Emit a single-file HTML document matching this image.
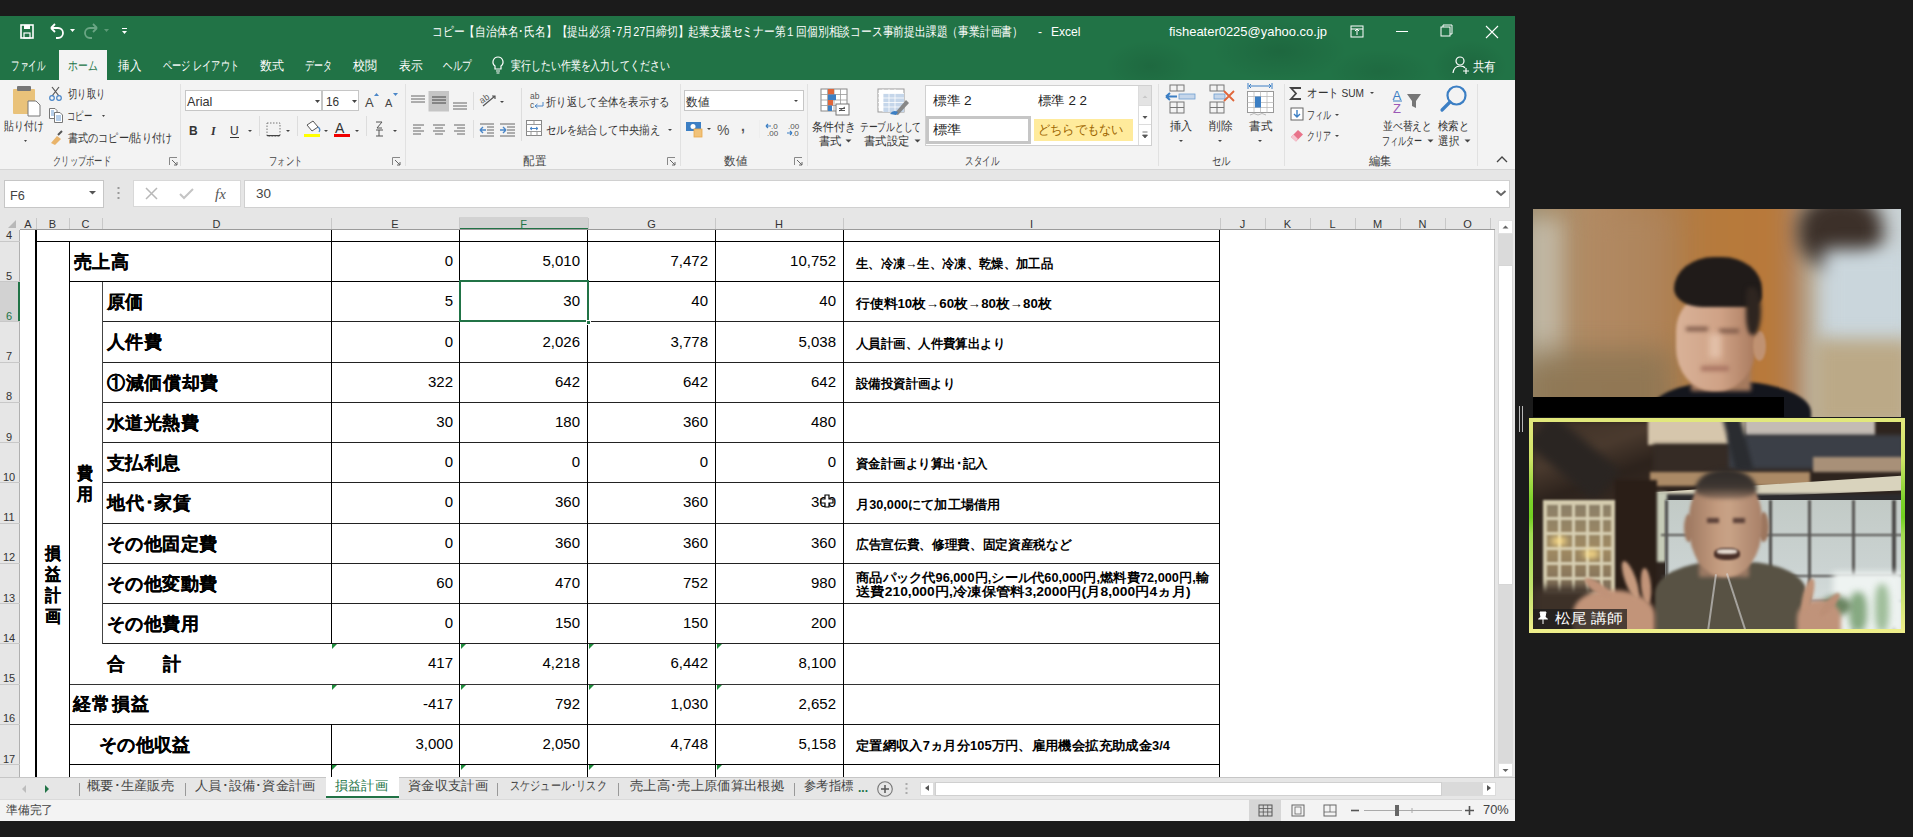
<!DOCTYPE html><html><head><meta charset="utf-8"><style>
*{margin:0;padding:0;box-sizing:border-box}
html,body{width:1913px;height:837px;overflow:hidden;background:#1b1b1b;font-family:"Liberation Sans",sans-serif;}
div{position:absolute}
.t{white-space:nowrap;line-height:1;transform:translateY(-50%)}
.w{color:#fff}
.rb{color:#444;font-size:12px}
.gl{color:#444;font-size:12px;transform:translate(-50%,-50%)}
.num{font-size:15px;color:#000;text-align:right;line-height:1;transform:translateY(-50%)}
.lab{font-size:18px;font-weight:bold;color:#000;line-height:1;transform:translateY(-50%);white-space:nowrap}
.note{font-size:12.5px;font-weight:bold;color:#000;line-height:14px;white-space:nowrap}
.ln{background:#000}
.sep{background:#d4d4d4;width:1px}
svg{position:absolute;overflow:visible}
</style></head><body>
<div style="left:0px;top:16px;width:1515px;height:64px;background:#217346"></div>
<div style="left:1000px;top:16px;width:515px;height:64px;background:radial-gradient(ellipse 60px 35px at 150px 50px, rgba(0,0,0,0.09), transparent 75%),radial-gradient(ellipse 90px 40px at 280px 35px, rgba(0,0,0,0.10), transparent 75%),radial-gradient(ellipse 70px 30px at 380px 55px, rgba(0,0,0,0.08), transparent 75%),radial-gradient(ellipse 50px 35px at 470px 50px, rgba(0,0,0,0.10), transparent 75%)"></div>
<svg style="left:0;top:16px" width="160" height="32">
<rect x="21" y="9" width="12" height="13" fill="none" stroke="#fff" stroke-width="1.6"/>
<rect x="24" y="9" width="6" height="4" fill="#fff"/>
<rect x="24" y="17" width="6" height="5" fill="none" stroke="#fff" stroke-width="1.2"/>
<path d="M51 12 L55 8 M51 12 L55 16 M51 12 H58 A5 5 0 0 1 58 22 H56" fill="none" stroke="#fff" stroke-width="1.8"/>
<path d="M70 13 L75 13 L72.5 16 Z" fill="#fff"/>
<path d="M97 12 L93 8 M97 12 L93 16 M97 12 H90 A5 5 0 0 0 90 22 H92" fill="none" stroke="#6aa584" stroke-width="1.8"/>
<path d="M104 13 L109 13 L106.5 16 Z" fill="#5c9a77"/>
<rect x="122" y="12" width="5" height="1" fill="#fff"/><path d="M122 15 L127 15 L124.5 18 Z" fill="#fff"/>
</svg>
<svg style="left:432px;top:21.30px" width="597.0" height="20.8"><text x="0" y="15.08" font-size="13" fill="#fff" font-weight="normal" font-family="Liberation Sans" textLength="591.0" lengthAdjust="spacingAndGlyphs" >コピー【自治体名･氏名】【提出必須･7月27日締切】起業支援セミナー第１回個別相談コース事前提出課題（事業計画書）</text></svg>
<svg style="left:1038px;top:22.10px" width="10.0" height="19.2"><text x="0" y="13.92" font-size="12" fill="#fff" font-weight="normal" font-family="Liberation Sans" textLength="4.0" lengthAdjust="spacingAndGlyphs" >-</text></svg>
<svg style="left:1051px;top:21.30px" width="35.5" height="20.8"><text x="0" y="15.08" font-size="13" fill="#fff" font-weight="normal" font-family="Liberation Sans" textLength="29.5" lengthAdjust="spacingAndGlyphs" >Excel</text></svg>
<svg style="left:1169px;top:21.10px" width="164.0" height="20.8"><text x="0" y="15.08" font-size="13" fill="#fff" font-weight="normal" font-family="Liberation Sans" textLength="158.0" lengthAdjust="spacingAndGlyphs" >fisheater0225@yahoo.co.jp</text></svg>
<svg style="left:1340px;top:16px" width="175" height="32">
<rect x="11" y="10" width="12" height="11" fill="none" stroke="#fff" stroke-width="1"/>
<path d="M11 13 H23 M15 15 L17 13 L19 15 M17 13 V19" fill="none" stroke="#fff" stroke-width="1"/>
<path d="M56 15.5 H68" stroke="#fff" stroke-width="1"/>
<rect x="101" y="11" width="9" height="9" fill="none" stroke="#fff" stroke-width="1"/>
<path d="M103 11 V9 H112 V18 H110" fill="none" stroke="#fff" stroke-width="1"/>
<path d="M146 10 L158 22 M158 10 L146 22" stroke="#fff" stroke-width="1.1"/>
</svg>
<div style="left:59px;top:50px;width:48px;height:30px;background:#f3f3f3"></div>
<svg style="left:11px;top:54.80px" width="40.0" height="20.0"><text x="0" y="14.50" font-size="12.5" fill="#fff" font-weight="normal" font-family="Liberation Sans" textLength="34.0" lengthAdjust="spacingAndGlyphs" >ファイル</text></svg>
<svg style="left:67.5px;top:54.80px" width="35.5" height="20.0"><text x="0" y="14.50" font-size="12.5" fill="#217346" font-weight="normal" font-family="Liberation Sans" textLength="29.5" lengthAdjust="spacingAndGlyphs" >ホーム</text></svg>
<svg style="left:118px;top:54.80px" width="29.0" height="20.0"><text x="0" y="14.50" font-size="12.5" fill="#fff" font-weight="normal" font-family="Liberation Sans" textLength="23.0" lengthAdjust="spacingAndGlyphs" >挿入</text></svg>
<svg style="left:163px;top:54.80px" width="82.0" height="20.0"><text x="0" y="14.50" font-size="12.5" fill="#fff" font-weight="normal" font-family="Liberation Sans" textLength="76.0" lengthAdjust="spacingAndGlyphs" >ページ レイアウト</text></svg>
<svg style="left:260px;top:54.80px" width="30.0" height="20.0"><text x="0" y="14.50" font-size="12.5" fill="#fff" font-weight="normal" font-family="Liberation Sans" textLength="24.0" lengthAdjust="spacingAndGlyphs" >数式</text></svg>
<svg style="left:305px;top:54.80px" width="33.0" height="20.0"><text x="0" y="14.50" font-size="12.5" fill="#fff" font-weight="normal" font-family="Liberation Sans" textLength="27.0" lengthAdjust="spacingAndGlyphs" >データ</text></svg>
<svg style="left:353px;top:54.80px" width="30.0" height="20.0"><text x="0" y="14.50" font-size="12.5" fill="#fff" font-weight="normal" font-family="Liberation Sans" textLength="24.0" lengthAdjust="spacingAndGlyphs" >校閲</text></svg>
<svg style="left:398.5px;top:54.80px" width="29.5" height="20.0"><text x="0" y="14.50" font-size="12.5" fill="#fff" font-weight="normal" font-family="Liberation Sans" textLength="23.5" lengthAdjust="spacingAndGlyphs" >表示</text></svg>
<svg style="left:443px;top:54.80px" width="34.6" height="20.0"><text x="0" y="14.50" font-size="12.5" fill="#fff" font-weight="normal" font-family="Liberation Sans" textLength="28.6" lengthAdjust="spacingAndGlyphs" >ヘルプ</text></svg>
<svg style="left:510.5px;top:54.80px" width="164.9" height="20.0"><text x="0" y="14.50" font-size="12.5" fill="#fff" font-weight="normal" font-family="Liberation Sans" textLength="158.9" lengthAdjust="spacingAndGlyphs" >実行したい作業を入力してください</text></svg>
<svg style="left:488px;top:54px" width="20" height="22"><path d="M10 3 A5 5 0 0 1 13 12 V15 H7 V12 A5 5 0 0 1 10 3 Z M8 17 H12 M8.5 19 H11.5" fill="none" stroke="#fff" stroke-width="1.2"/></svg>
<svg style="left:1450px;top:55px" width="20" height="22"><circle cx="10" cy="6" r="4" fill="none" stroke="#fff" stroke-width="1.2"/><path d="M3 18 Q4 11 10 11 Q14 11 15 13" fill="none" stroke="#fff" stroke-width="1.2"/><path d="M13 16 H19 M16 13 V19" stroke="#fff" stroke-width="1.2"/></svg>
<svg style="left:1472.7px;top:55.60px" width="28.9" height="20.0"><text x="0" y="14.50" font-size="12.5" fill="#fff" font-weight="normal" font-family="Liberation Sans" textLength="22.9" lengthAdjust="spacingAndGlyphs" >共有</text></svg>
<div style="left:0px;top:80px;width:1515px;height:89px;background:#f3f3f3"></div>
<div style="left:0px;top:169px;width:1515px;height:1px;background:#d5d5d5"></div>
<div style="left:180px;top:84px;width:1px;height:82px;background:#e1e1e1"></div>
<div style="left:404.5px;top:84px;width:1px;height:82px;background:#e1e1e1"></div>
<div style="left:680px;top:84px;width:1px;height:82px;background:#e1e1e1"></div>
<div style="left:807px;top:84px;width:1px;height:82px;background:#e1e1e1"></div>
<div style="left:1157.5px;top:84px;width:1px;height:82px;background:#e1e1e1"></div>
<div style="left:1283.5px;top:84px;width:1px;height:82px;background:#e1e1e1"></div>
<div style="left:1477px;top:84px;width:1px;height:82px;background:#e1e1e1"></div>
<svg style="left:53px;top:151.80px" width="64.0" height="18.4"><text x="0" y="13.34" font-size="11.5" fill="#444" font-weight="normal" font-family="Liberation Sans" textLength="58.0" lengthAdjust="spacingAndGlyphs" >クリップボード</text></svg>
<svg style="left:268.5px;top:151.80px" width="39.2" height="18.4"><text x="0" y="13.34" font-size="11.5" fill="#444" font-weight="normal" font-family="Liberation Sans" textLength="33.2" lengthAdjust="spacingAndGlyphs" >フォント</text></svg>
<svg style="left:522.7px;top:151.80px" width="29.0" height="18.4"><text x="0" y="13.34" font-size="11.5" fill="#444" font-weight="normal" font-family="Liberation Sans" textLength="23.0" lengthAdjust="spacingAndGlyphs" >配置</text></svg>
<svg style="left:724.3px;top:151.80px" width="29.1" height="18.4"><text x="0" y="13.34" font-size="11.5" fill="#444" font-weight="normal" font-family="Liberation Sans" textLength="23.1" lengthAdjust="spacingAndGlyphs" >数値</text></svg>
<svg style="left:965px;top:151.80px" width="40.0" height="18.4"><text x="0" y="13.34" font-size="11.5" fill="#444" font-weight="normal" font-family="Liberation Sans" textLength="34.0" lengthAdjust="spacingAndGlyphs" >スタイル</text></svg>
<svg style="left:1211.5px;top:151.80px" width="24.8" height="18.4"><text x="0" y="13.34" font-size="11.5" fill="#444" font-weight="normal" font-family="Liberation Sans" textLength="18.8" lengthAdjust="spacingAndGlyphs" >セル</text></svg>
<svg style="left:1368.6px;top:151.80px" width="28.6" height="18.4"><text x="0" y="13.34" font-size="11.5" fill="#444" font-weight="normal" font-family="Liberation Sans" textLength="22.6" lengthAdjust="spacingAndGlyphs" >編集</text></svg>
<svg style="left:169px;top:157px" width="9" height="9"><path d="M0.5 8 V0.5 H8" fill="none" stroke="#888" stroke-width="1"/><path d="M3 3 L8 8 M5 8 H8 V5" fill="none" stroke="#666" stroke-width="1"/></svg>
<svg style="left:392px;top:157px" width="9" height="9"><path d="M0.5 8 V0.5 H8" fill="none" stroke="#888" stroke-width="1"/><path d="M3 3 L8 8 M5 8 H8 V5" fill="none" stroke="#666" stroke-width="1"/></svg>
<svg style="left:667px;top:157px" width="9" height="9"><path d="M0.5 8 V0.5 H8" fill="none" stroke="#888" stroke-width="1"/><path d="M3 3 L8 8 M5 8 H8 V5" fill="none" stroke="#666" stroke-width="1"/></svg>
<svg style="left:794px;top:157px" width="9" height="9"><path d="M0.5 8 V0.5 H8" fill="none" stroke="#888" stroke-width="1"/><path d="M3 3 L8 8 M5 8 H8 V5" fill="none" stroke="#666" stroke-width="1"/></svg>
<svg style="left:1496px;top:156px" width="12" height="8"><path d="M1 6 L6 1 L11 6" fill="none" stroke="#444" stroke-width="1.3"/></svg>
<svg style="left:0;top:80px" width="180" height="80">
<rect x="13" y="9" width="22" height="25" rx="1" fill="#e9c27a"/>
<rect x="17" y="6" width="14" height="5" rx="1" fill="#777"/>
<path d="M28 21 H36 L40 25 V36 H28 Z" fill="#fff" stroke="#777" stroke-width="1"/>
<path d="M24 60 L27 60 L25.5 62 Z" fill="#444"/>
<path d="M52 7 L59 16 M59 7 L52 16" stroke="#555" stroke-width="1.2"/>
<circle cx="52" cy="18" r="2.3" fill="none" stroke="#4a86c8" stroke-width="1.2"/>
<circle cx="59" cy="18" r="2.3" fill="none" stroke="#4a86c8" stroke-width="1.2"/>
<path d="M49.5 28.5 H55 L57 30.5 V38.5 H49.5 Z" fill="#fff" stroke="#777" stroke-width="1"/>
<path d="M51 31 H54 M51 33 H55 M51 35 H55" stroke="#4a86c8" stroke-width="0.8"/>
<path d="M54.5 32.5 H60 L62.5 35 V42.5 H54.5 Z" fill="#fff" stroke="#777" stroke-width="1"/>
<path d="M56 36 H61 M56 38 H61 M56 40 H61" stroke="#4a86c8" stroke-width="0.8"/>
<path d="M102 35 L105 35 L103.5 37 Z" fill="#444"/>
<path d="M51 63 L57 56 L61 59 L55 65 Z" fill="#e9b46a"/>
<path d="M58 55 L62 51" stroke="#555" stroke-width="2"/>
</svg>
<svg style="left:4.2px;top:116.80px" width="45.4" height="18.4"><text x="0" y="13.34" font-size="11.5" fill="#333" font-weight="normal" font-family="Liberation Sans" textLength="39.4" lengthAdjust="spacingAndGlyphs" >貼り付け</text></svg>
<svg style="left:67.5px;top:85.10px" width="43.0" height="18.4"><text x="0" y="13.34" font-size="11.5" fill="#333" font-weight="normal" font-family="Liberation Sans" textLength="37.0" lengthAdjust="spacingAndGlyphs" >切り取り</text></svg>
<svg style="left:67px;top:106.60px" width="31.0" height="18.4"><text x="0" y="13.34" font-size="11.5" fill="#333" font-weight="normal" font-family="Liberation Sans" textLength="25.0" lengthAdjust="spacingAndGlyphs" >コピー</text></svg>
<svg style="left:67.5px;top:129.30px" width="109.9" height="18.4"><text x="0" y="13.34" font-size="11.5" fill="#333" font-weight="normal" font-family="Liberation Sans" textLength="103.9" lengthAdjust="spacingAndGlyphs" >書式のコピー/貼り付け</text></svg>
<div style="left:185px;top:90px;width:137px;height:21px;background:#fff;border:1px solid #c6c6c6"></div>
<div style="left:322px;top:90px;width:37px;height:21px;background:#fff;border:1px solid #c6c6c6"></div>
<svg style="left:187px;top:91.00px" width="31.4" height="20.8"><text x="0" y="15.08" font-size="13" fill="#333" font-weight="normal" font-family="Liberation Sans" textLength="25.4" lengthAdjust="spacingAndGlyphs" >Arial</text></svg>
<svg style="left:325.6px;top:91.00px" width="19.1" height="20.8"><text x="0" y="15.08" font-size="13" fill="#333" font-weight="normal" font-family="Liberation Sans" textLength="13.1" lengthAdjust="spacingAndGlyphs" >16</text></svg>
<svg style="left:180px;top:80px" width="230" height="80">
<path d="M135 20 L140 20 L137.5 23 Z" fill="#444"/>
<path d="M172 20 L177 20 L174.5 23 Z" fill="#444"/>
<text x="185" y="27" font-size="13" fill="#444" font-family="Liberation Sans">A</text>
<path d="M194 16 L196.5 13 L199 16 Z" fill="#4a86c8"/>
<text x="205" y="27" font-size="11" fill="#444" font-family="Liberation Sans">A</text>
<path d="M213 13 L218 13 L215.5 16 Z" fill="#4a86c8"/>
<text x="9" y="55" font-size="12" font-weight="bold" fill="#333" font-family="Liberation Sans">B</text>
<text x="31" y="55" font-size="12" font-style="italic" font-weight="bold" fill="#333" font-family="Liberation Serif">I</text>
<text x="50" y="55" font-size="12" fill="#333" font-family="Liberation Sans">U</text>
<rect x="50" y="57" width="9" height="1" fill="#333"/>
<path d="M68 50 L72 50 L70 52 Z" fill="#444"/>
<rect x="79" y="36" width="1" height="20" fill="#ddd"/>
<rect x="87" y="43" width="13" height="13" fill="none" stroke="#777" stroke-width="1" stroke-dasharray="1.5 1.5"/>
<rect x="87" y="55" width="13" height="1.2" fill="#444"/>
<path d="M106 50 L110 50 L108 52 Z" fill="#444"/>
<rect x="117" y="36" width="1" height="20" fill="#ddd"/>
<path d="M127 45 L133 41 L138 47 L132 51 Z" fill="#fff" stroke="#555" stroke-width="1"/>
<path d="M138 47 Q141 49 139 52" fill="none" stroke="#4a86c8" stroke-width="1.3"/>
<rect x="124" y="54" width="16" height="3" fill="#ffff00"/>
<path d="M144 50 L148 50 L146 52 Z" fill="#444"/>
<text x="155" y="53" font-size="14" fill="#333" font-family="Liberation Sans">A</text>
<rect x="154" y="54" width="16" height="3" fill="#f00000"/>
<path d="M175 50 L179 50 L177 52 Z" fill="#444"/>
<rect x="186" y="36" width="1" height="20" fill="#ddd"/>
<path d="M196 42 H202 L197 48 H202 M196 50 H203 M199 50 V56 M196 56 H203" fill="none" stroke="#555" stroke-width="1"/>
<path d="M213 50 L217 50 L215 52 Z" fill="#444"/>
</svg>
<svg style="left:404px;top:80px" width="280" height="80">
<path d="M7 16 H21 M7 19 H21 M7 22 H21" stroke="#666" stroke-width="1"/>
<rect x="24.5" y="11" width="20.5" height="20.5" fill="#c5c5c5"/>
<path d="M28 17 H42 M28 20 H42 M28 23 H42" stroke="#444" stroke-width="1"/>
<path d="M49 23 H63 M49 26 H63 M49 29 H63" stroke="#666" stroke-width="1"/>
<rect x="69" y="12" width="1" height="18" fill="#ddd"/>
<path d="M79 26 L91 16 M88 16 H91 V19" fill="none" stroke="#555" stroke-width="1.2"/>
<text x="76" y="22" font-size="9" fill="#555" font-family="Liberation Sans" transform="rotate(-35 80 20)">ab</text>
<path d="M96 21 L100 21 L98 23 Z" fill="#444"/>
<rect x="117" y="8" width="1" height="53" fill="#ddd"/>
<text x="126" y="19" font-size="8.5" fill="#555" font-family="Liberation Sans">ab</text>
<text x="126" y="28" font-size="8.5" fill="#555" font-family="Liberation Sans">c</text>
<path d="M131 26 H139 V22 M131 26 L133.5 24 M131 26 L133.5 28" fill="none" stroke="#4a86c8" stroke-width="1"/>
<path d="M9 45 H20 M9 48 H17 M9 51 H20 M9 54 H17" stroke="#666" stroke-width="1"/>
<path d="M29 45 H41 M31 48 H39 M29 51 H41 M31 54 H39" stroke="#666" stroke-width="1"/>
<path d="M50 45 H61 M53 48 H61 M50 51 H61 M53 54 H61" stroke="#666" stroke-width="1"/>
<rect x="69" y="40" width="1" height="18" fill="#ddd"/>
<path d="M76 44 H90 M83 47 H90 M83 50 H90 M83 53 H90 M76 56 H90" stroke="#666" stroke-width="1"/>
<path d="M76 50 H82 M76 50 L79 47 M76 50 L79 53" fill="none" stroke="#4a86c8" stroke-width="1.4"/>
<path d="M96 44 H111 M103 47 H111 M103 50 H111 M103 53 H111 M96 56 H111" stroke="#666" stroke-width="1"/>
<path d="M96 50 H102 M102 50 L99 47 M102 50 L99 53" fill="none" stroke="#4a86c8" stroke-width="1.4"/>
<rect x="122.5" y="40.5" width="15" height="15" fill="#fff" stroke="#888" stroke-width="1"/>
<path d="M122.5 44.5 H137.5 M122.5 51.5 H137.5 M130 40.5 V44.5 M127 51.5 V55.5 M133 51.5 V55.5" stroke="#999" stroke-width="1"/>
<path d="M126 48.5 H134 M126 48.5 L128 47 M126 48.5 L128 50 M134 48.5 L132 47 M134 48.5 L132 50" fill="none" stroke="#4a86c8" stroke-width="1"/>
<path d="M264 49 L268 49 L266 51 Z" fill="#444"/>
</svg>
<svg style="left:545.7px;top:93.30px" width="129.7" height="18.4"><text x="0" y="13.34" font-size="11.5" fill="#333" font-weight="normal" font-family="Liberation Sans" textLength="123.7" lengthAdjust="spacingAndGlyphs" >折り返して全体を表示する</text></svg>
<svg style="left:546px;top:121.10px" width="120.0" height="18.4"><text x="0" y="13.34" font-size="11.5" fill="#333" font-weight="normal" font-family="Liberation Sans" textLength="114.0" lengthAdjust="spacingAndGlyphs" >セルを結合して中央揃え</text></svg>
<div style="left:683.5px;top:90px;width:120px;height:21px;background:#fff;border:1px solid #c6c6c6"></div>
<svg style="left:686px;top:92.10px" width="29.4" height="19.2"><text x="0" y="13.92" font-size="12" fill="#333" font-weight="normal" font-family="Liberation Sans" textLength="23.4" lengthAdjust="spacingAndGlyphs" >数値</text></svg>
<svg style="left:680px;top:80px" width="130" height="80">
<path d="M114 20 L118 20 L116 22 Z" fill="#444"/>
<rect x="6" y="42" width="15" height="9" fill="#3c7fc4"/>
<circle cx="13" cy="46.5" r="2.5" fill="#fff"/>
<rect x="14" y="49" width="8" height="8" fill="#f0c27a" stroke="#e9a94a" stroke-width="0.8"/>
<path d="M27 48 L31 48 L29 50 Z" fill="#444"/>
<text x="37" y="55" font-size="14" fill="#555" font-family="Liberation Sans">%</text>
<text x="61" y="51" font-size="14" font-weight="bold" fill="#555" font-family="Liberation Sans">,</text>
<rect x="79" y="40" width="1" height="18" fill="#eee"/>
<text x="91" y="49" font-size="8" fill="#555" font-family="Liberation Sans">.0</text>
<text x="87" y="56" font-size="8" fill="#555" font-family="Liberation Sans">.00</text>
<path d="M86 46 H91 M86 46 L88 44 M86 46 L88 48" fill="none" stroke="#3c7fc4" stroke-width="1.2"/>
<text x="108" y="49" font-size="8" fill="#555" font-family="Liberation Sans">.00</text>
<text x="112" y="56" font-size="8" fill="#555" font-family="Liberation Sans">.0</text>
<path d="M107 53 H112 M112 53 L110 51 M112 53 L110 55" fill="none" stroke="#3c7fc4" stroke-width="1.2"/>
</svg>
<svg style="left:810px;top:80px" width="120" height="80">
<rect x="11" y="9" width="26" height="22" fill="#fff" stroke="#888" stroke-width="1"/>
<path d="M11 14.5 H37 M11 20 H37 M11 25.5 H37 M17.5 9 V31 M24 9 V31 M30.5 9 V31" stroke="#999" stroke-width="0.8"/>
<rect x="18" y="9" width="6" height="5.5" fill="#e0663a"/>
<rect x="18" y="14.5" width="8" height="5.5" fill="#3c7fc4"/>
<rect x="18" y="20" width="5" height="5.5" fill="#e0663a"/>
<rect x="18" y="25.5" width="4" height="5.5" fill="#3c7fc4"/>
<rect x="26" y="24" width="13" height="11" fill="#fff" stroke="#777" stroke-width="1"/>
<path d="M29 31 L35 27 M29 28.5 H35 M29 30.5 H35" stroke="#444" stroke-width="0.9"/>
<rect x="68" y="9" width="26" height="23" fill="#fff" stroke="#999" stroke-width="1"/>
<rect x="73" y="13.5" width="21" height="18.5" fill="#c5d6ea"/>
<path d="M68 13.5 H94 M68 18 H94 M68 22.5 H94 M68 27 H94 M73 9 V32 M79 9 V32 M85 9 V32" stroke="#fff" stroke-width="0.8"/>
<path d="M84 34 L96 20 L99 23 L88 35 Z" fill="#888"/>
<path d="M80 34 Q83 29 88 32 L86 35 Z" fill="#3c7fc4"/>
</svg>
<svg style="left:812.4px;top:117.60px" width="49.7" height="18.4"><text x="0" y="13.34" font-size="11.5" fill="#333" font-weight="normal" font-family="Liberation Sans" textLength="43.7" lengthAdjust="spacingAndGlyphs" >条件付き</text></svg>
<svg style="left:819.2px;top:131.80px" width="28.7" height="18.4"><text x="0" y="13.34" font-size="11.5" fill="#333" font-weight="normal" font-family="Liberation Sans" textLength="22.7" lengthAdjust="spacingAndGlyphs" >書式</text></svg>
<svg style="left:845px;top:139px" width="8" height="5"><path d="M0.5 0.5 L6.5 0.5 L3.5 3.5 Z" fill="#444"/></svg>
<svg style="left:860.2px;top:117.60px" width="67.2" height="18.4"><text x="0" y="13.34" font-size="11.5" fill="#333" font-weight="normal" font-family="Liberation Sans" textLength="61.2" lengthAdjust="spacingAndGlyphs" >テーブルとして</text></svg>
<svg style="left:864px;top:131.80px" width="51.8" height="18.4"><text x="0" y="13.34" font-size="11.5" fill="#333" font-weight="normal" font-family="Liberation Sans" textLength="45.8" lengthAdjust="spacingAndGlyphs" >書式設定</text></svg>
<svg style="left:914px;top:139px" width="8" height="5"><path d="M0.5 0.5 L6.5 0.5 L3.5 3.5 Z" fill="#444"/></svg>
<div style="left:925px;top:85px;width:227px;height:61px;background:#fff;border:1px solid #d0d0d0"></div>
<div style="left:926px;top:116px;width:105px;height:28px;background:#fff;border:3px solid #c6c6c6"></div>
<div style="left:1034px;top:119px;width:99px;height:22px;background:#ffeb9c"></div>
<svg style="left:933px;top:89.90px" width="44.6" height="20.8"><text x="0" y="15.08" font-size="13" fill="#222" font-weight="normal" font-family="Liberation Sans" textLength="38.6" lengthAdjust="spacingAndGlyphs" >標準 2</text></svg>
<svg style="left:1038.3px;top:89.90px" width="55.0" height="20.8"><text x="0" y="15.08" font-size="13" fill="#222" font-weight="normal" font-family="Liberation Sans" textLength="49.0" lengthAdjust="spacingAndGlyphs" >標準 2 2</text></svg>
<svg style="left:933px;top:118.60px" width="34.6" height="20.8"><text x="0" y="15.08" font-size="13" fill="#222" font-weight="normal" font-family="Liberation Sans" textLength="28.6" lengthAdjust="spacingAndGlyphs" >標準</text></svg>
<svg style="left:1038.3px;top:118.60px" width="91.6" height="20.8"><text x="0" y="15.08" font-size="13" fill="#9c6500" font-weight="normal" font-family="Liberation Sans" textLength="85.6" lengthAdjust="spacingAndGlyphs" >どちらでもない</text></svg>
<div style="left:1137.5px;top:86px;width:13.5px;height:59px;background:#fff;border-left:1px solid #dcdcdc"></div>
<div style="left:1138.5px;top:86px;width:12.5px;height:19.5px;background:#e3e3e3"></div>
<div style="left:1138.5px;top:105px;width:12.5px;height:1px;background:#dcdcdc"></div>
<div style="left:1138.5px;top:124px;width:12.5px;height:1px;background:#dcdcdc"></div>
<svg style="left:1138px;top:85px" width="14" height="61">
<path d="M4.5 13 L7 10.5 L9.5 13 Z" fill="#c8c8c8"/>
<path d="M4.5 31 L9.5 31 L7 34 Z" fill="#555"/>
<path d="M4.5 47 H9.5 M4.5 50 L9.5 50 L7 53 Z" fill="#555" stroke="#555" stroke-width="0.8"/>
</svg>
<svg style="left:1157px;top:80px" width="130" height="80">
<rect x="13" y="5" width="14" height="6" fill="none" stroke="#777" stroke-width="1"/><path d="M20 5 V11" stroke="#777"/>
<rect x="13" y="22" width="14" height="11" fill="none" stroke="#777" stroke-width="1"/><path d="M20 22 V33 M13 27.5 H27" stroke="#777"/>
<rect x="22" y="14" width="16" height="5" fill="#c5d6ea" stroke="#6e9fd0" stroke-width="0.8"/>
<path d="M9 16.5 H20 M9 16.5 L13 13 M9 16.5 L13 20" fill="none" stroke="#3c7fc4" stroke-width="2"/>
<rect x="53" y="5" width="14" height="6" fill="none" stroke="#777" stroke-width="1"/><path d="M60 5 V11" stroke="#777"/>
<rect x="53" y="22" width="14" height="11" fill="none" stroke="#777" stroke-width="1"/><path d="M60 22 V33 M53 27.5 H67" stroke="#777"/>
<rect x="57" y="14" width="11" height="5" fill="#c5d6ea" stroke="#6e9fd0" stroke-width="0.8"/>
<path d="M67 11 L77 21 M77 11 L67 21" stroke="#e0663a" stroke-width="1.8"/>
<path d="M92 6 H114 M92 6 L94 4 M92 6 L94 8 M114 6 L112 4 M114 6 L112 8" fill="none" stroke="#3c7fc4" stroke-width="1"/>
<path d="M91 3 V9 M115 3 V9" stroke="#3c7fc4"/>
<rect x="90.5" y="11.5" width="26" height="21" fill="#fff" stroke="#999" stroke-width="1"/>
<path d="M90.5 16.5 H116.5 M90.5 22.5 H116.5 M90.5 27.5 H116.5 M97 11.5 V32.5 M103.5 11.5 V32.5 M110 11.5 V32.5" stroke="#bbb" stroke-width="0.8"/>
<rect x="98" y="16.5" width="6" height="11" fill="#3c7fc4"/>
<path d="M93 35 Q97 32 101 35 Q105 32 109 35" fill="none" stroke="#aaa" stroke-width="0.8"/>
<path d="M22 60 L26 60 L24 62 Z" fill="#444"/>
<path d="M61 60 L65 60 L63 62 Z" fill="#444"/>
<path d="M101 60 L105 60 L103 62 Z" fill="#444"/>
</svg>
<svg style="left:1169.7px;top:117.00px" width="28.3" height="18.4"><text x="0" y="13.34" font-size="11.5" fill="#333" font-weight="normal" font-family="Liberation Sans" textLength="22.3" lengthAdjust="spacingAndGlyphs" >挿入</text></svg>
<svg style="left:1208.6px;top:117.00px" width="29.4" height="18.4"><text x="0" y="13.34" font-size="11.5" fill="#333" font-weight="normal" font-family="Liberation Sans" textLength="23.4" lengthAdjust="spacingAndGlyphs" >削除</text></svg>
<svg style="left:1248.5px;top:117.00px" width="29.2" height="18.4"><text x="0" y="13.34" font-size="11.5" fill="#333" font-weight="normal" font-family="Liberation Sans" textLength="23.2" lengthAdjust="spacingAndGlyphs" >書式</text></svg>
<svg style="left:1284px;top:80px" width="230" height="80">
<path d="M17 8 H7 L12 13.5 L7 19 H17" fill="none" stroke="#444" stroke-width="1.8"/>
<path d="M86 12 L90 12 L88 14 Z" fill="#444"/>
<rect x="7" y="28" width="12" height="12" fill="#fff" stroke="#666" stroke-width="1"/>
<path d="M13 30 V37 M10 34 L13 37 L16 34" fill="none" stroke="#3c7fc4" stroke-width="1.4"/>
<path d="M51 34 L55 34 L53 36 Z" fill="#444"/>
<path d="M7 57 L14 50 L19 54.5 L12 61.5 Z" fill="#e8738a"/><path d="M7 57 L9.5 54.5 L14 59 L12 61.5 Z" fill="#f6c6d0"/>
<path d="M51 55 L55 55 L53 57 Z" fill="#444"/>
<text x="108.5" y="20" font-size="13" fill="#3c7fc4" font-family="Liberation Sans">A</text>
<path d="M109 21 H118" stroke="#3c7fc4" stroke-width="1"/>
<text x="109" y="33" font-size="13" fill="#9b59b6" font-family="Liberation Sans">Z</text>
<path d="M123 14 H137 L132 21 V28 L128 26 V21 Z" fill="#777"/>
<circle cx="172.5" cy="15.5" r="9" fill="none" stroke="#3c7fc4" stroke-width="2.2"/>
<path d="M166 22 L158 30" stroke="#3c7fc4" stroke-width="3.2" stroke-linecap="round"/>
</svg>
<svg style="left:1307px;top:84.10px" width="63.0" height="18.4"><text x="0" y="13.34" font-size="11.5" fill="#333" font-weight="normal" font-family="Liberation Sans" textLength="57.0" lengthAdjust="spacingAndGlyphs" >オート SUM</text></svg>
<svg style="left:1307px;top:105.80px" width="30.0" height="18.4"><text x="0" y="13.34" font-size="11.5" fill="#333" font-weight="normal" font-family="Liberation Sans" textLength="24.0" lengthAdjust="spacingAndGlyphs" >フィル</text></svg>
<svg style="left:1307px;top:126.80px" width="30.0" height="18.4"><text x="0" y="13.34" font-size="11.5" fill="#333" font-weight="normal" font-family="Liberation Sans" textLength="24.0" lengthAdjust="spacingAndGlyphs" >クリア</text></svg>
<svg style="left:1382.7px;top:116.80px" width="54.9" height="18.4"><text x="0" y="13.34" font-size="11.5" fill="#333" font-weight="normal" font-family="Liberation Sans" textLength="48.9" lengthAdjust="spacingAndGlyphs" >並べ替えと</text></svg>
<svg style="left:1381.8px;top:131.80px" width="46.4" height="18.4"><text x="0" y="13.34" font-size="11.5" fill="#333" font-weight="normal" font-family="Liberation Sans" textLength="40.4" lengthAdjust="spacingAndGlyphs" >フィルター</text></svg>
<svg style="left:1427px;top:139px" width="8" height="5"><path d="M0.5 0.5 L6.5 0.5 L3.5 3.5 Z" fill="#444"/></svg>
<svg style="left:1438.2px;top:116.80px" width="37.1" height="18.4"><text x="0" y="13.34" font-size="11.5" fill="#333" font-weight="normal" font-family="Liberation Sans" textLength="31.1" lengthAdjust="spacingAndGlyphs" >検索と</text></svg>
<svg style="left:1438px;top:131.80px" width="27.0" height="18.4"><text x="0" y="13.34" font-size="11.5" fill="#333" font-weight="normal" font-family="Liberation Sans" textLength="21.0" lengthAdjust="spacingAndGlyphs" >選択</text></svg>
<svg style="left:1464px;top:139px" width="8" height="5"><path d="M0.5 0.5 L6.5 0.5 L3.5 3.5 Z" fill="#444"/></svg>
<div style="left:0px;top:170px;width:1515px;height:60px;background:#e6e6e6"></div>
<div style="left:4px;top:180px;width:100px;height:28px;background:#fff;border:1px solid #c6c6c6"></div>
<svg style="left:10.2px;top:185.20px" width="20.8" height="20.8"><text x="0" y="15.08" font-size="13" fill="#444" font-weight="normal" font-family="Liberation Sans" textLength="14.8" lengthAdjust="spacingAndGlyphs" >F6</text></svg>
<svg style="left:88px;top:190px" width="10" height="6"><path d="M1 1 L8 1 L4.5 4.5 Z" fill="#555"/></svg>
<svg style="left:116px;top:186px" width="6" height="16"><rect x="1.5" y="1" width="2" height="2" fill="#999"/><rect x="1.5" y="6" width="2" height="2" fill="#999"/><rect x="1.5" y="11" width="2" height="2" fill="#999"/></svg>
<div style="left:133px;top:180px;width:108px;height:27px;background:#fff;border:1px solid #d8d8d8"></div>
<svg style="left:133px;top:180px" width="108" height="27">
<path d="M13 8 L24 19 M24 8 L13 19" stroke="#b8b8b8" stroke-width="1.5"/>
<path d="M47 14 L51 18 L60 9" fill="none" stroke="#c4c4c4" stroke-width="2"/>
<text x="82" y="19" font-size="15" font-style="italic" fill="#555" font-family="Liberation Serif">fx</text>
</svg>
<div style="left:244px;top:180px;width:1266px;height:28px;background:#fff;border:1px solid #d0d0d0"></div>
<svg style="left:256px;top:182.40px" width="21.0" height="21.6"><text x="0" y="15.66" font-size="13.5" fill="#444" font-weight="normal" font-family="Liberation Sans" textLength="15.0" lengthAdjust="spacingAndGlyphs" >30</text></svg>
<svg style="left:1495px;top:189px" width="12" height="10"><path d="M1.5 2 L6 6 L10.5 2" fill="none" stroke="#666" stroke-width="2"/></svg>
<div style="left:459px;top:217px;width:129px;height:13px;background:#d2d2d2"></div>
<div style="left:459px;top:228px;width:129px;height:2px;background:#217346"></div>
<div class="t" style="left:28.0px;top:224px;font-size:11px;color:#333;transform:translate(-50%,-50%)">A</div>
<div style="left:36px;top:218px;width:1px;height:12px;background:#c8c8c8"></div>
<div class="t" style="left:52.5px;top:224px;font-size:11px;color:#333;transform:translate(-50%,-50%)">B</div>
<div style="left:69px;top:218px;width:1px;height:12px;background:#c8c8c8"></div>
<div class="t" style="left:85.5px;top:224px;font-size:11px;color:#333;transform:translate(-50%,-50%)">C</div>
<div style="left:102px;top:218px;width:1px;height:12px;background:#c8c8c8"></div>
<div class="t" style="left:216.5px;top:224px;font-size:11px;color:#333;transform:translate(-50%,-50%)">D</div>
<div style="left:331px;top:218px;width:1px;height:12px;background:#c8c8c8"></div>
<div class="t" style="left:395.0px;top:224px;font-size:11px;color:#333;transform:translate(-50%,-50%)">E</div>
<div style="left:459px;top:218px;width:1px;height:12px;background:#c8c8c8"></div>
<div class="t" style="left:523.5px;top:224px;font-size:11px;color:#217346;transform:translate(-50%,-50%)">F</div>
<div style="left:588px;top:218px;width:1px;height:12px;background:#c8c8c8"></div>
<div class="t" style="left:651.5px;top:224px;font-size:11px;color:#333;transform:translate(-50%,-50%)">G</div>
<div style="left:715px;top:218px;width:1px;height:12px;background:#c8c8c8"></div>
<div class="t" style="left:779.0px;top:224px;font-size:11px;color:#333;transform:translate(-50%,-50%)">H</div>
<div style="left:843px;top:218px;width:1px;height:12px;background:#c8c8c8"></div>
<div class="t" style="left:1031.5px;top:224px;font-size:11px;color:#333;transform:translate(-50%,-50%)">I</div>
<div style="left:1220px;top:218px;width:1px;height:12px;background:#c8c8c8"></div>
<div class="t" style="left:1242.5px;top:224px;font-size:11px;color:#333;transform:translate(-50%,-50%)">J</div>
<div style="left:1265px;top:218px;width:1px;height:12px;background:#c8c8c8"></div>
<div class="t" style="left:1287.5px;top:224px;font-size:11px;color:#333;transform:translate(-50%,-50%)">K</div>
<div style="left:1310px;top:218px;width:1px;height:12px;background:#c8c8c8"></div>
<div class="t" style="left:1332.5px;top:224px;font-size:11px;color:#333;transform:translate(-50%,-50%)">L</div>
<div style="left:1355px;top:218px;width:1px;height:12px;background:#c8c8c8"></div>
<div class="t" style="left:1377.5px;top:224px;font-size:11px;color:#333;transform:translate(-50%,-50%)">M</div>
<div style="left:1400px;top:218px;width:1px;height:12px;background:#c8c8c8"></div>
<div class="t" style="left:1422.5px;top:224px;font-size:11px;color:#333;transform:translate(-50%,-50%)">N</div>
<div style="left:1445px;top:218px;width:1px;height:12px;background:#c8c8c8"></div>
<div class="t" style="left:1467.5px;top:224px;font-size:11px;color:#333;transform:translate(-50%,-50%)">O</div>
<div style="left:1490px;top:218px;width:1px;height:12px;background:#c8c8c8"></div>
<div style="left:20px;top:229px;width:1475px;height:1px;background:#9b9b9b"></div>
<svg style="left:4px;top:218px" width="14" height="11"><path d="M12 2 L12 10 L4 10 Z" fill="#b8b8b8"/></svg>
<div style="left:20px;top:230px;width:1475px;height:547px;background:#fff"></div>
<div style="left:1494px;top:230px;width:1px;height:547px;background:#c8c8c8"></div>
<div style="left:0px;top:230px;width:20px;height:547px;background:#e6e6e6"></div>
<div style="left:19px;top:230px;width:1px;height:547px;background:#b0b0b0"></div>
<div style="left:0px;top:281.64px;width:20px;height:40.24px;background:#d2d2d2"></div>
<div style="left:18px;top:281.64px;width:2px;height:40.24px;background:#217346"></div>
<div style="left:0px;top:240.9px;width:20px;height:1px;background:#c8c8c8"></div>
<div class="t" style="left:9px;top:235.4px;font-size:11px;color:#333;transform:translate(-50%,-50%)">4</div>
<div style="left:0px;top:281.14px;width:20px;height:1px;background:#c8c8c8"></div>
<div class="t" style="left:9px;top:275.64px;font-size:11px;color:#333;transform:translate(-50%,-50%)">5</div>
<div style="left:0px;top:321.38px;width:20px;height:1px;background:#c8c8c8"></div>
<div class="t" style="left:9px;top:315.88px;font-size:11px;color:#217346;transform:translate(-50%,-50%)">6</div>
<div style="left:0px;top:361.62px;width:20px;height:1px;background:#c8c8c8"></div>
<div class="t" style="left:9px;top:356.12px;font-size:11px;color:#333;transform:translate(-50%,-50%)">7</div>
<div style="left:0px;top:401.86px;width:20px;height:1px;background:#c8c8c8"></div>
<div class="t" style="left:9px;top:396.36px;font-size:11px;color:#333;transform:translate(-50%,-50%)">8</div>
<div style="left:0px;top:442.1px;width:20px;height:1px;background:#c8c8c8"></div>
<div class="t" style="left:9px;top:436.6px;font-size:11px;color:#333;transform:translate(-50%,-50%)">9</div>
<div style="left:0px;top:482.34000000000003px;width:20px;height:1px;background:#c8c8c8"></div>
<div class="t" style="left:9px;top:476.84000000000003px;font-size:11px;color:#333;transform:translate(-50%,-50%)">10</div>
<div style="left:0px;top:522.58px;width:20px;height:1px;background:#c8c8c8"></div>
<div class="t" style="left:9px;top:517.08px;font-size:11px;color:#333;transform:translate(-50%,-50%)">11</div>
<div style="left:0px;top:562.82px;width:20px;height:1px;background:#c8c8c8"></div>
<div class="t" style="left:9px;top:557.32px;font-size:11px;color:#333;transform:translate(-50%,-50%)">12</div>
<div style="left:0px;top:603.0600000000001px;width:20px;height:1px;background:#c8c8c8"></div>
<div class="t" style="left:9px;top:597.5600000000001px;font-size:11px;color:#333;transform:translate(-50%,-50%)">13</div>
<div style="left:0px;top:643.3000000000001px;width:20px;height:1px;background:#c8c8c8"></div>
<div class="t" style="left:9px;top:637.8000000000001px;font-size:11px;color:#333;transform:translate(-50%,-50%)">14</div>
<div style="left:0px;top:683.5400000000001px;width:20px;height:1px;background:#c8c8c8"></div>
<div class="t" style="left:9px;top:678.0400000000001px;font-size:11px;color:#333;transform:translate(-50%,-50%)">15</div>
<div style="left:0px;top:723.78px;width:20px;height:1px;background:#c8c8c8"></div>
<div class="t" style="left:9px;top:718.28px;font-size:11px;color:#333;transform:translate(-50%,-50%)">16</div>
<div style="left:0px;top:764.02px;width:20px;height:1px;background:#c8c8c8"></div>
<div class="t" style="left:9px;top:758.52px;font-size:11px;color:#333;transform:translate(-50%,-50%)">17</div>
<div style="left:0px;top:776.5px;width:20px;height:1px;background:#c8c8c8"></div>
<div style="left:36px;top:240.9px;width:1184px;height:1px;background:#000"></div>
<div style="left:69px;top:281.1px;width:1151px;height:1px;background:#000"></div>
<div style="left:102px;top:321.4px;width:1118px;height:1px;background:#222"></div>
<div style="left:102px;top:361.6px;width:1118px;height:1px;background:#222"></div>
<div style="left:102px;top:401.9px;width:1118px;height:1px;background:#222"></div>
<div style="left:102px;top:442.1px;width:1118px;height:1px;background:#222"></div>
<div style="left:102px;top:482.3px;width:1118px;height:1px;background:#222"></div>
<div style="left:102px;top:522.6px;width:1118px;height:1px;background:#222"></div>
<div style="left:102px;top:562.8px;width:1118px;height:1px;background:#222"></div>
<div style="left:102px;top:603.1px;width:1118px;height:1px;background:#222"></div>
<div style="left:102px;top:643.3px;width:1118px;height:1px;background:#222"></div>
<div style="left:69px;top:683.5px;width:1151px;height:1px;background:#333"></div>
<div style="left:69px;top:723.8px;width:1151px;height:1px;background:#111"></div>
<div style="left:69px;top:764.0px;width:1151px;height:1px;background:#000"></div>
<div style="left:35px;top:230px;width:2px;height:547px;background:#000"></div>
<div style="left:69px;top:241.4px;width:1px;height:535.6px;background:#000"></div>
<div style="left:102px;top:281.64px;width:1px;height:362.1600000000001px;background:#444"></div>
<div style="left:331px;top:230px;width:1px;height:413.80000000000007px;background:#000"></div>
<div style="left:331px;top:724.28px;width:1px;height:52.72000000000003px;background:#000"></div>
<div style="left:459px;top:230px;width:1px;height:547px;background:#000"></div>
<div style="left:587px;top:230px;width:1px;height:547px;background:#000"></div>
<div style="left:715px;top:230px;width:1px;height:547px;background:#000"></div>
<div style="left:843px;top:230px;width:1px;height:547px;background:#000"></div>
<div style="left:1219px;top:230px;width:1px;height:547px;background:#000"></div>
<svg style="left:332px;top:644.3000000000001px" width="6" height="6"><path d="M0 0 H5 L0 5 Z" fill="#1e8c3c"/></svg>
<svg style="left:461px;top:644.3000000000001px" width="6" height="6"><path d="M0 0 H5 L0 5 Z" fill="#1e8c3c"/></svg>
<svg style="left:589px;top:644.3000000000001px" width="6" height="6"><path d="M0 0 H5 L0 5 Z" fill="#1e8c3c"/></svg>
<svg style="left:717px;top:644.3000000000001px" width="6" height="6"><path d="M0 0 H5 L0 5 Z" fill="#1e8c3c"/></svg>
<svg style="left:332px;top:684.5400000000001px" width="6" height="6"><path d="M0 0 H5 L0 5 Z" fill="#1e8c3c"/></svg>
<svg style="left:461px;top:684.5400000000001px" width="6" height="6"><path d="M0 0 H5 L0 5 Z" fill="#1e8c3c"/></svg>
<svg style="left:589px;top:684.5400000000001px" width="6" height="6"><path d="M0 0 H5 L0 5 Z" fill="#1e8c3c"/></svg>
<svg style="left:717px;top:684.5400000000001px" width="6" height="6"><path d="M0 0 H5 L0 5 Z" fill="#1e8c3c"/></svg>
<svg style="left:332px;top:765.02px" width="6" height="6"><path d="M0 0 H5 L0 5 Z" fill="#1e8c3c"/></svg>
<svg style="left:461px;top:765.02px" width="6" height="6"><path d="M0 0 H5 L0 5 Z" fill="#1e8c3c"/></svg>
<svg style="left:589px;top:765.02px" width="6" height="6"><path d="M0 0 H5 L0 5 Z" fill="#1e8c3c"/></svg>
<svg style="left:717px;top:765.02px" width="6" height="6"><path d="M0 0 H5 L0 5 Z" fill="#1e8c3c"/></svg>
<div style="left:458.5px;top:280.14px;width:130px;height:42.24px;border:2px solid #217346"></div>
<div style="left:586px;top:319.88px;width:5px;height:5px;background:#217346;border:1px solid #fff"></div>
<svg style="left:74px;top:247.82px" width="60.6" height="28.0"><text x="0" y="20.30" font-size="17.5" fill="#000" font-weight="bold" font-family="Liberation Sans" textLength="54.6" lengthAdjust="spacing" stroke="#000" stroke-width="0.2">売上高</text></svg>
<svg style="left:106.6px;top:288.06px" width="42.1" height="28.0"><text x="0" y="20.30" font-size="17.5" fill="#000" font-weight="bold" font-family="Liberation Sans" textLength="36.1" lengthAdjust="spacing" stroke="#000" stroke-width="0.2">原価</text></svg>
<svg style="left:106.6px;top:328.30px" width="60.9" height="28.0"><text x="0" y="20.30" font-size="17.5" fill="#000" font-weight="bold" font-family="Liberation Sans" textLength="54.9" lengthAdjust="spacing" stroke="#000" stroke-width="0.2">人件費</text></svg>
<svg style="left:106.6px;top:368.54px" width="117.4" height="28.0"><text x="0" y="20.30" font-size="17.5" fill="#000" font-weight="bold" font-family="Liberation Sans" textLength="111.4" lengthAdjust="spacing" stroke="#000" stroke-width="0.2">①減価償却費</text></svg>
<svg style="left:106.6px;top:408.78px" width="97.8" height="28.0"><text x="0" y="20.30" font-size="17.5" fill="#000" font-weight="bold" font-family="Liberation Sans" textLength="91.8" lengthAdjust="spacing" stroke="#000" stroke-width="0.2">水道光熱費</text></svg>
<svg style="left:106.6px;top:449.02px" width="79.4" height="28.0"><text x="0" y="20.30" font-size="17.5" fill="#000" font-weight="bold" font-family="Liberation Sans" textLength="73.4" lengthAdjust="spacing" stroke="#000" stroke-width="0.2">支払利息</text></svg>
<svg style="left:106.6px;top:489.26px" width="90.0" height="28.0"><text x="0" y="20.30" font-size="17.5" fill="#000" font-weight="bold" font-family="Liberation Sans" textLength="84.0" lengthAdjust="spacing" stroke="#000" stroke-width="0.2">地代･家賃</text></svg>
<svg style="left:106.6px;top:529.50px" width="116.1" height="28.0"><text x="0" y="20.30" font-size="17.5" fill="#000" font-weight="bold" font-family="Liberation Sans" textLength="110.1" lengthAdjust="spacing" stroke="#000" stroke-width="0.2">その他固定費</text></svg>
<svg style="left:106.6px;top:569.74px" width="116.1" height="28.0"><text x="0" y="20.30" font-size="17.5" fill="#000" font-weight="bold" font-family="Liberation Sans" textLength="110.1" lengthAdjust="spacing" stroke="#000" stroke-width="0.2">その他変動費</text></svg>
<svg style="left:106.6px;top:609.98px" width="97.8" height="28.0"><text x="0" y="20.30" font-size="17.5" fill="#000" font-weight="bold" font-family="Liberation Sans" textLength="91.8" lengthAdjust="spacing" stroke="#000" stroke-width="0.2">その他費用</text></svg>
<svg style="left:107px;top:650.22px" width="23.0" height="28.0"><text x="0" y="20.30" font-size="17.5" fill="#000" font-weight="bold" font-family="Liberation Sans" textLength="17.0" lengthAdjust="spacing" stroke="#000" stroke-width="0.2">合</text></svg>
<svg style="left:163.4px;top:650.22px" width="22.6" height="28.0"><text x="0" y="20.30" font-size="17.5" fill="#000" font-weight="bold" font-family="Liberation Sans" textLength="16.6" lengthAdjust="spacing" stroke="#000" stroke-width="0.2">計</text></svg>
<svg style="left:73px;top:690.46px" width="81.8" height="28.0"><text x="0" y="20.30" font-size="17.5" fill="#000" font-weight="bold" font-family="Liberation Sans" textLength="75.8" lengthAdjust="spacing" stroke="#000" stroke-width="0.2">経常損益</text></svg>
<svg style="left:99.2px;top:730.70px" width="97.4" height="28.0"><text x="0" y="20.30" font-size="17.5" fill="#000" font-weight="bold" font-family="Liberation Sans" textLength="91.4" lengthAdjust="spacing" stroke="#000" stroke-width="0.2">その他収益</text></svg>
<svg style="left:44.8px;top:538.90px" width="21.9" height="27.2"><text x="0" y="19.72" font-size="17" fill="#000" font-weight="bold" font-family="Liberation Sans" textLength="15.9" lengthAdjust="spacingAndGlyphs" stroke="#000" stroke-width="0.25">損</text></svg>
<svg style="left:44.8px;top:559.80px" width="21.9" height="27.2"><text x="0" y="19.72" font-size="17" fill="#000" font-weight="bold" font-family="Liberation Sans" textLength="15.9" lengthAdjust="spacingAndGlyphs" stroke="#000" stroke-width="0.25">益</text></svg>
<svg style="left:44.8px;top:580.70px" width="21.9" height="27.2"><text x="0" y="19.72" font-size="17" fill="#000" font-weight="bold" font-family="Liberation Sans" textLength="15.9" lengthAdjust="spacingAndGlyphs" stroke="#000" stroke-width="0.25">計</text></svg>
<svg style="left:44.8px;top:601.60px" width="21.9" height="27.2"><text x="0" y="19.72" font-size="17" fill="#000" font-weight="bold" font-family="Liberation Sans" textLength="15.9" lengthAdjust="spacingAndGlyphs" stroke="#000" stroke-width="0.25">画</text></svg>
<svg style="left:76.6px;top:459.20px" width="21.9" height="27.2"><text x="0" y="19.72" font-size="17" fill="#000" font-weight="bold" font-family="Liberation Sans" textLength="15.9" lengthAdjust="spacingAndGlyphs" stroke="#000" stroke-width="0.25">費</text></svg>
<svg style="left:76.6px;top:480.20px" width="21.9" height="27.2"><text x="0" y="19.72" font-size="17" fill="#000" font-weight="bold" font-family="Liberation Sans" textLength="15.9" lengthAdjust="spacingAndGlyphs" stroke="#000" stroke-width="0.25">用</text></svg>
<div class="num" style="left:333px;top:260.02px;width:120px">0</div>
<div class="num" style="left:460px;top:260.02px;width:120px">5,010</div>
<div class="num" style="left:588px;top:260.02px;width:120px">7,472</div>
<div class="num" style="left:716px;top:260.02px;width:120px">10,752</div>
<div class="num" style="left:333px;top:300.26px;width:120px">5</div>
<div class="num" style="left:460px;top:300.26px;width:120px">30</div>
<div class="num" style="left:588px;top:300.26px;width:120px">40</div>
<div class="num" style="left:716px;top:300.26px;width:120px">40</div>
<div class="num" style="left:333px;top:340.50px;width:120px">0</div>
<div class="num" style="left:460px;top:340.50px;width:120px">2,026</div>
<div class="num" style="left:588px;top:340.50px;width:120px">3,778</div>
<div class="num" style="left:716px;top:340.50px;width:120px">5,038</div>
<div class="num" style="left:333px;top:380.74px;width:120px">322</div>
<div class="num" style="left:460px;top:380.74px;width:120px">642</div>
<div class="num" style="left:588px;top:380.74px;width:120px">642</div>
<div class="num" style="left:716px;top:380.74px;width:120px">642</div>
<div class="num" style="left:333px;top:420.98px;width:120px">30</div>
<div class="num" style="left:460px;top:420.98px;width:120px">180</div>
<div class="num" style="left:588px;top:420.98px;width:120px">360</div>
<div class="num" style="left:716px;top:420.98px;width:120px">480</div>
<div class="num" style="left:333px;top:461.22px;width:120px">0</div>
<div class="num" style="left:460px;top:461.22px;width:120px">0</div>
<div class="num" style="left:588px;top:461.22px;width:120px">0</div>
<div class="num" style="left:716px;top:461.22px;width:120px">0</div>
<div class="num" style="left:333px;top:501.46px;width:120px">0</div>
<div class="num" style="left:460px;top:501.46px;width:120px">360</div>
<div class="num" style="left:588px;top:501.46px;width:120px">360</div>
<div class="num" style="left:716px;top:501.46px;width:120px">360</div>
<div class="num" style="left:333px;top:541.70px;width:120px">0</div>
<div class="num" style="left:460px;top:541.70px;width:120px">360</div>
<div class="num" style="left:588px;top:541.70px;width:120px">360</div>
<div class="num" style="left:716px;top:541.70px;width:120px">360</div>
<div class="num" style="left:333px;top:581.94px;width:120px">60</div>
<div class="num" style="left:460px;top:581.94px;width:120px">470</div>
<div class="num" style="left:588px;top:581.94px;width:120px">752</div>
<div class="num" style="left:716px;top:581.94px;width:120px">980</div>
<div class="num" style="left:333px;top:622.18px;width:120px">0</div>
<div class="num" style="left:460px;top:622.18px;width:120px">150</div>
<div class="num" style="left:588px;top:622.18px;width:120px">150</div>
<div class="num" style="left:716px;top:622.18px;width:120px">200</div>
<div class="num" style="left:333px;top:662.42px;width:120px">417</div>
<div class="num" style="left:460px;top:662.42px;width:120px">4,218</div>
<div class="num" style="left:588px;top:662.42px;width:120px">6,442</div>
<div class="num" style="left:716px;top:662.42px;width:120px">8,100</div>
<div class="num" style="left:333px;top:702.66px;width:120px">-417</div>
<div class="num" style="left:460px;top:702.66px;width:120px">792</div>
<div class="num" style="left:588px;top:702.66px;width:120px">1,030</div>
<div class="num" style="left:716px;top:702.66px;width:120px">2,652</div>
<div class="num" style="left:333px;top:742.90px;width:120px">3,000</div>
<div class="num" style="left:460px;top:742.90px;width:120px">2,050</div>
<div class="num" style="left:588px;top:742.90px;width:120px">4,748</div>
<div class="num" style="left:716px;top:742.90px;width:120px">5,158</div>
<svg style="left:856px;top:252.80px" width="203.2" height="20.0"><text x="0" y="14.50" font-size="12.5" fill="#000" font-weight="bold" font-family="Liberation Sans" textLength="197.2" lengthAdjust="spacingAndGlyphs" >生、冷凍→生、冷凍、乾燥、加工品</text></svg>
<svg style="left:856px;top:292.60px" width="201.6" height="20.0"><text x="0" y="14.50" font-size="12.5" fill="#000" font-weight="bold" font-family="Liberation Sans" textLength="195.6" lengthAdjust="spacingAndGlyphs" >行使料10枚→60枚→80枚→80枚</text></svg>
<svg style="left:856px;top:333.00px" width="155.0" height="20.0"><text x="0" y="14.50" font-size="12.5" fill="#000" font-weight="bold" font-family="Liberation Sans" textLength="149.0" lengthAdjust="spacingAndGlyphs" >人員計画、人件費算出より</text></svg>
<svg style="left:856px;top:373.00px" width="105.3" height="20.0"><text x="0" y="14.50" font-size="12.5" fill="#000" font-weight="bold" font-family="Liberation Sans" textLength="99.3" lengthAdjust="spacingAndGlyphs" >設備投資計画より</text></svg>
<svg style="left:856px;top:453.00px" width="137.6" height="20.0"><text x="0" y="14.50" font-size="12.5" fill="#000" font-weight="bold" font-family="Liberation Sans" textLength="131.6" lengthAdjust="spacingAndGlyphs" >資金計画より算出･記入</text></svg>
<svg style="left:856px;top:493.60px" width="150.5" height="20.0"><text x="0" y="14.50" font-size="12.5" fill="#000" font-weight="bold" font-family="Liberation Sans" textLength="144.5" lengthAdjust="spacingAndGlyphs" >月30,000にて加工場借用</text></svg>
<svg style="left:856px;top:533.70px" width="221.4" height="20.0"><text x="0" y="14.50" font-size="12.5" fill="#000" font-weight="bold" font-family="Liberation Sans" textLength="215.4" lengthAdjust="spacingAndGlyphs" >広告宣伝費、修理費、固定資産税など</text></svg>
<svg style="left:856px;top:567.00px" width="359.0" height="20.0"><text x="0" y="14.50" font-size="12.5" fill="#000" font-weight="bold" font-family="Liberation Sans" textLength="353.0" lengthAdjust="spacingAndGlyphs" >商品パック代96,000円,シール代60,000円,燃料費72,000円,輸</text></svg>
<svg style="left:856px;top:581.00px" width="340.5" height="20.0"><text x="0" y="14.50" font-size="12.5" fill="#000" font-weight="bold" font-family="Liberation Sans" textLength="334.5" lengthAdjust="spacingAndGlyphs" >送費210,000円,冷凍保管料3,2000円(月8,000円4ヵ月)</text></svg>
<svg style="left:856px;top:735.00px" width="319.9" height="20.0"><text x="0" y="14.50" font-size="12.5" fill="#000" font-weight="bold" font-family="Liberation Sans" textLength="313.9" lengthAdjust="spacingAndGlyphs" >定置網収入7ヵ月分105万円、雇用機会拡充助成金3/4</text></svg>
<svg style="left:820px;top:494px" width="14" height="14"><path d="M5 1 H9 V5 H13 V9 H9 V13 H5 V9 H1 V5 H5 Z" fill="#fff" stroke="#000" stroke-width="1.2"/></svg>
<div style="left:1495px;top:217px;width:20px;height:560px;background:#e6e6e6"></div>
<div style="left:1497.5px;top:233px;width:15px;height:530px;background:#dadada"></div>
<div style="left:1497.5px;top:219.5px;width:15px;height:14px;background:#fff;border:1px solid #e0e0e0"></div>
<svg style="left:1497.5px;top:219.5px" width="15" height="14"><path d="M4.5 8.5 L7.5 5.5 L10.5 8.5 Z" fill="#666"/></svg>
<div style="left:1497.5px;top:265px;width:15px;height:320px;background:#fff;border:1px solid #d6d6d6"></div>
<div style="left:1497.5px;top:763px;width:15px;height:14px;background:#fff;border:1px solid #e0e0e0"></div>
<svg style="left:1497.5px;top:763px" width="15" height="14"><path d="M4.5 6 L10.5 6 L7.5 9 Z" fill="#666"/></svg>
<div style="left:0px;top:777px;width:1515px;height:22px;background:#e6e6e6;border-top:1px solid #c6c6c6"></div>
<svg style="left:18px;top:783px" width="40" height="12"><path d="M8 2 L4 6 L8 10 Z" fill="#bdbdbd"/><path d="M27 2 L31 6 L27 10 Z" fill="#217346"/></svg>
<div style="left:78.5px;top:783px;width:1px;height:13px;background:#999"></div>
<div style="left:184.5px;top:783px;width:1px;height:13px;background:#999"></div>
<div style="left:497px;top:783px;width:1px;height:13px;background:#999"></div>
<div style="left:618px;top:783px;width:1px;height:13px;background:#999"></div>
<div style="left:794px;top:783px;width:1px;height:13px;background:#999"></div>
<div style="left:325.5px;top:777px;width:73px;height:21px;background:#fff"></div>
<div style="left:325.5px;top:796px;width:73px;height:2px;background:#217346"></div>
<svg style="left:87.3px;top:775.10px" width="93.1" height="20.0"><text x="0" y="14.50" font-size="12.5" fill="#444" font-weight="normal" font-family="Liberation Sans" textLength="87.1" lengthAdjust="spacingAndGlyphs" >概要･生産販売</text></svg>
<svg style="left:194.5px;top:775.10px" width="126.5" height="20.0"><text x="0" y="14.50" font-size="12.5" fill="#444" font-weight="normal" font-family="Liberation Sans" textLength="120.5" lengthAdjust="spacingAndGlyphs" >人員･設備･資金計画</text></svg>
<svg style="left:335px;top:775.10px" width="58.7" height="20.0"><text x="0" y="14.50" font-size="12.5" fill="#217346" font-weight="normal" font-family="Liberation Sans" textLength="52.7" lengthAdjust="spacingAndGlyphs" >損益計画</text></svg>
<svg style="left:407.6px;top:775.10px" width="85.8" height="20.0"><text x="0" y="14.50" font-size="12.5" fill="#444" font-weight="normal" font-family="Liberation Sans" textLength="79.8" lengthAdjust="spacingAndGlyphs" >資金収支計画</text></svg>
<svg style="left:509.6px;top:775.10px" width="102.7" height="20.0"><text x="0" y="14.50" font-size="12.5" fill="#444" font-weight="normal" font-family="Liberation Sans" textLength="96.7" lengthAdjust="spacingAndGlyphs" >スケジュール･リスク</text></svg>
<svg style="left:629.8px;top:775.10px" width="160.2" height="20.0"><text x="0" y="14.50" font-size="12.5" fill="#444" font-weight="normal" font-family="Liberation Sans" textLength="154.2" lengthAdjust="spacingAndGlyphs" >売上高･売上原価算出根拠</text></svg>
<svg style="left:803.6px;top:775.10px" width="55.1" height="20.0"><text x="0" y="14.50" font-size="12.5" fill="#444" font-weight="normal" font-family="Liberation Sans" textLength="49.1" lengthAdjust="spacingAndGlyphs" >参考指標</text></svg>
<svg style="left:858px;top:777.90px" width="16.0" height="19.2"><text x="0" y="13.92" font-size="12" fill="#217346" font-weight="bold" font-family="Liberation Sans" textLength="10.0" lengthAdjust="spacingAndGlyphs" >...</text></svg>
<svg style="left:876px;top:780px" width="18" height="18"><circle cx="9" cy="9" r="7.3" fill="none" stroke="#777" stroke-width="1.1"/><path d="M9 5 V13 M5 9 H13" stroke="#555" stroke-width="1.5"/></svg>
<svg style="left:904px;top:782px" width="6" height="14"><rect x="1.5" y="1" width="2" height="2" fill="#aaa"/><rect x="1.5" y="5.5" width="2" height="2" fill="#aaa"/><rect x="1.5" y="10" width="2" height="2" fill="#aaa"/></svg>
<div style="left:920px;top:781.5px;width:14px;height:14px;background:#fff;border:1px solid #dcdcdc"></div>
<svg style="left:920px;top:781px" width="14" height="14"><path d="M9 4 L5 7 L9 10 Z" fill="#555"/></svg>
<div style="left:934px;top:781.5px;width:548px;height:14px;background:#dadada"></div>
<div style="left:935px;top:781.5px;width:507px;height:14px;background:#fff;border:1px solid #d0d0d0"></div>
<div style="left:1482px;top:781.5px;width:14px;height:14px;background:#fff;border:1px solid #dcdcdc"></div>
<svg style="left:1482px;top:781px" width="14" height="14"><path d="M5 4 L9 7 L5 10 Z" fill="#555"/></svg>
<div style="left:0px;top:799px;width:1515px;height:22px;background:#f3f3f3;border-top:1px solid #dadada"></div>
<svg style="left:5.5px;top:801.10px" width="53.2" height="18.4"><text x="0" y="13.34" font-size="11.5" fill="#444" font-weight="normal" font-family="Liberation Sans" textLength="47.2" lengthAdjust="spacingAndGlyphs" >準備完了</text></svg>
<div style="left:1249px;top:800px;width:32px;height:21px;background:#d6d6d6"></div>
<svg style="left:1240px;top:800px" width="275" height="21">
<rect x="19" y="5" width="13" height="11" fill="none" stroke="#555" stroke-width="1"/>
<path d="M19 8.5 H32 M19 12 H32 M23.3 5 V16 M27.7 5 V16" stroke="#555" stroke-width="0.8"/>
<rect x="52" y="5" width="12" height="11" fill="none" stroke="#666" stroke-width="1"/>
<rect x="55" y="7" width="6" height="7" fill="none" stroke="#666" stroke-width="0.8"/>
<rect x="84" y="5" width="12" height="11" fill="none" stroke="#666" stroke-width="1"/>
<path d="M90 5 V12 M84 12 H96" stroke="#666" stroke-width="0.8"/>
<path d="M111 10.5 H119" stroke="#555" stroke-width="1.6"/>
<path d="M124 10.5 H222" stroke="#aaa" stroke-width="1"/>
<rect x="155" y="5" width="4" height="11" fill="#666"/>
<path d="M172 8 V13" stroke="#aaa" stroke-width="1"/>
<path d="M225 10.5 H234 M229.5 6 V15" stroke="#555" stroke-width="1.6"/>
</svg>
<svg style="left:1483px;top:800.40px" width="31.7" height="19.2"><text x="0" y="13.92" font-size="12" fill="#444" font-weight="normal" font-family="Liberation Sans" textLength="25.7" lengthAdjust="spacingAndGlyphs" >70%</text></svg>
<div style="left:1518.5px;top:406px;width:1.2px;height:26px;background:#b8b8b8"></div>
<div style="left:1522px;top:406px;width:1.2px;height:26px;background:#b8b8b8"></div>
<div style="left:1533px;top:209px;width:368px;height:208px;overflow:hidden;background:#ad7c4a">
<div style="left:-30px;top:-30px;width:428px;height:267px;filter:blur(8px);
background:linear-gradient(90deg,#8e8a78 0px,#a8906e 45px,#b28a62 90px,#ad7d4d 160px,#b67a3c 210px,#b8793a 270px,#b0805a 290px,#b8a890 305px,#c6cccc 330px,#ccd6da 428px)"></div>
<div style="left:-10px;top:10px;width:40px;height:150px;background:#d6d6cc;filter:blur(10px);opacity:0.55"></div>
<div style="left:60px;top:0px;width:80px;height:207px;background:#b08a66;filter:blur(14px);opacity:0.5"></div>
<div style="left:265px;top:-15px;width:85px;height:75px;border-radius:45%;background:#3c3029;filter:blur(9px)"></div>
<div style="left:290px;top:40px;width:90px;height:95px;background:#cad6dc;filter:blur(9px)"></div>
<div style="left:280px;top:130px;width:100px;height:90px;background:#bba987;filter:blur(9px)"></div>
<div style="left:-10px;top:140px;width:150px;height:80px;background:#8a7452;filter:blur(14px);opacity:0.8"></div>
<div style="left:118px;top:172px;width:160px;height:60px;border-radius:48% 52% 0 0;background:#14161d;filter:blur(1.5px)"></div>
<div style="left:158px;top:150px;width:60px;height:32px;background:#a57a5e;filter:blur(2px)"></div>
<div style="left:143px;top:86px;width:80px;height:96px;border-radius:38% 40% 48% 45%;background:linear-gradient(90deg,#d9b298 0%,#cfa286 55%,#a97a5e 100%);filter:blur(1.5px)"></div>
<div style="left:220px;top:122px;width:13px;height:30px;border-radius:50%;background:#c09272;filter:blur(1px)"></div>
<div style="left:141px;top:48px;width:88px;height:50px;border-radius:50% 50% 20% 35% / 70% 70% 25% 40%;background:#201b19;filter:blur(1.5px)"></div>
<div style="left:213px;top:78px;width:15px;height:48px;border-radius:20% 50% 50% 40%;background:#2e2520;filter:blur(2px)"></div>
<div style="left:153px;top:118px;width:22px;height:4px;background:#7a5646;filter:blur(2px)"></div>
<div style="left:186px;top:120px;width:20px;height:4px;background:#7a5646;filter:blur(2px)"></div>
<div style="left:168px;top:157px;width:28px;height:5px;background:#a87462;filter:blur(2px)"></div>
<div style="left:176px;top:125px;width:12px;height:24px;background:#e2c0a8;filter:blur(3px)"></div>
<div style="left:0;top:188px;width:251px;height:20px;background:#000"></div>
</div>
<div style="left:1529px;top:418px;width:376px;height:215px;border:4px solid #d8e67c;border-image:linear-gradient(180deg,#e2e87c 0%,#cfe466 18%,#7cd22a 38%,#72d020 46%,#a2dc52 54%,#c2e26c 80%,#eeee8a 100%) 1;background:#2e241e;overflow:hidden">
<div style="left:0;top:0;width:368px;height:207px;overflow:hidden">
<div style="left:0;top:0;width:370px;height:209px;background:#2e241e"></div>
<div style="left:0;top:0;width:130px;height:90px;background:linear-gradient(160deg,#3e3026 0%,#4a3a2e 35%,#2c221c 60%,#3e3027 100%);filter:blur(2px)"></div>
<div style="left:20px;top:-10px;width:40px;height:90px;background:#2a2522;filter:blur(4px);transform:rotate(-50deg)"></div>
<div style="left:115px;top:-4px;width:97px;height:27px;background:#d6c6ac;filter:blur(1.5px)"></div>
<div style="left:212px;top:-4px;width:130px;height:18px;background:#c4bcb4;filter:blur(1.5px)"></div>
<div style="left:120px;top:22px;width:90px;height:30px;background:#352b25;filter:blur(2px)"></div>
<div style="left:196px;top:13px;width:175px;height:34px;background:#3b3f47;filter:blur(2px)"></div>
<div style="left:196px;top:-4px;width:18px;height:52px;background:#2a2c30;filter:blur(2px);transform:skewX(14deg)"></div>
<div style="left:117px;top:50px;width:160px;height:14px;background:#ab8a66;filter:blur(1.5px)"></div>
<div style="left:280px;top:35px;width:90px;height:15px;background:#a89078;filter:blur(1.5px)"></div>
<div style="left:118px;top:52px;width:252px;height:30px;background:#d9d3bd;clip-path:polygon(0 62%,100% 5%,100% 55%,0 88%);filter:blur(1px)"></div>
<div style="left:125px;top:72px;width:245px;height:8px;background:#2c2b2e;filter:blur(1.5px)"></div>
<div style="left:118px;top:70px;width:16px;height:70px;background:#c6ccb8;filter:blur(1.5px)"></div>
<div style="left:132px;top:78px;width:245px;height:135px;background:linear-gradient(180deg,#c2cac6 0%,#cbd3d2 50%,#dde5e3 100%)"></div>
<div style="left:128px;top:78px;width:245px;height:135px;filter:blur(0.9px);opacity:0.8">
<div style="left:4px;top:0;width:3px;height:135px;background:#2e2a28"></div>
<div style="left:108px;top:0;width:3px;height:135px;background:#2e2a28"></div>
<div style="left:147px;top:0;width:3px;height:135px;background:#3a3634"></div>
<div style="left:191px;top:0;width:3px;height:135px;background:#3a3634"></div>
<div style="left:231px;top:0;width:4px;height:135px;background:#2e2a28"></div>
<div style="left:0;top:34px;width:245px;height:2px;background:#3a3634"></div>
<div style="left:0;top:75px;width:245px;height:2px;background:#3a3634"></div>
<div style="left:0;top:100px;width:245px;height:2px;background:#5a6a80"></div>
</div>
<div style="left:300px;top:150px;width:70px;height:60px;background:#eef3f1;filter:blur(3px)"></div>
<div style="left:316px;top:170px;width:18px;height:40px;border-radius:40%;background:#5a8a52;filter:blur(3.5px);opacity:0.7"></div>
<div style="left:342px;top:162px;width:14px;height:48px;border-radius:40%;background:#6a9a60;filter:blur(3.5px);opacity:0.6"></div>
<div style="left:288px;top:174px;width:30px;height:20px;border-radius:50%;background:#4a6a3e;filter:blur(3px);opacity:0.8"></div>
<div style="left:82px;top:58px;width:42px;height:125px;background:#2a1e17;filter:blur(1.5px)"></div>
<div style="left:10px;top:78px;width:72px;height:98px;background:#d4cbae;filter:blur(1px)"></div>
<div style="left:10px;top:78px;width:72px;height:98px;filter:blur(0.8px)">
<div style="left:4px;top:5px;width:64px;height:90px;background:
repeating-linear-gradient(90deg, transparent 0 11px, #d8d0b4 11px 14px),
repeating-linear-gradient(180deg, transparent 0 12px, #d8d0b4 12px 15px),
linear-gradient(180deg,#8c8068,#a08a62 50%,#7a6a58)"></div>
</div>
<div style="left:18px;top:115px;width:16px;height:8px;border-radius:50%;background:#ffe08a;filter:blur(3px)"></div>
<div style="left:50px;top:128px;width:16px;height:8px;border-radius:50%;background:#ffe08a;filter:blur(3px)"></div>
<div style="left:0;top:165px;width:60px;height:50px;background:#3d3128;filter:blur(4px)"></div>
<div style="left:122px;top:140px;width:152px;height:80px;border-radius:40% 40% 0 0;background:#585244;filter:blur(1.5px)"></div>
<div style="left:166px;top:125px;width:50px;height:30px;background:#9c7a64;filter:blur(2px)"></div>
<div style="left:151px;top:92px;width:10px;height:28px;border-radius:50%;background:#a07a62;filter:blur(1.5px)"></div>
<div style="left:225px;top:90px;width:11px;height:30px;border-radius:50%;background:#9c765e;filter:blur(1.5px)"></div>
<div style="left:156px;top:52px;width:73px;height:103px;border-radius:44% 44% 48% 48%;background:linear-gradient(90deg,#a07a62,#c49c80 40%,#c8a286 55%,#a88068);filter:blur(1.5px)"></div>
<div style="left:162px;top:47px;width:62px;height:30px;border-radius:50% 50% 40% 40% / 70% 70% 30% 30%;background:linear-gradient(180deg,#2e2a28 0%,#3e3732 60%,rgba(120,95,80,0.6) 100%);filter:blur(2px)"></div>
<div style="left:174px;top:96px;width:12px;height:5px;background:#5a4038;filter:blur(1.5px)"></div>
<div style="left:200px;top:96px;width:12px;height:5px;background:#5a4038;filter:blur(1.5px)"></div>
<div style="left:181px;top:126px;width:26px;height:12px;border-radius:40%;background:#4a3028;filter:blur(1.2px)"></div>
<div style="left:184px;top:127px;width:20px;height:5px;border-radius:30%;background:#e2d6cc;filter:blur(1px)"></div>
<div style="left:40px;top:168px;width:82px;height:50px;border-radius:45% 50% 10% 20%;background:#c29479;filter:blur(2px)"></div>
<div style="left:92px;top:138px;width:11px;height:40px;border-radius:50%;background:#c69a7e;filter:blur(1.5px);transform:rotate(-20deg)"></div>
<div style="left:108px;top:146px;width:10px;height:36px;border-radius:50%;background:#c29479;filter:blur(1.5px);transform:rotate(-5deg)"></div>
<div style="left:60px;top:150px;width:10px;height:32px;border-radius:50%;background:#c09278;filter:blur(1.5px);transform:rotate(-55deg)"></div>
<div style="left:264px;top:178px;width:44px;height:40px;border-radius:45% 45% 20% 20%;background:#c0937a;filter:blur(2px)"></div>
<div style="left:270px;top:156px;width:10px;height:34px;border-radius:50%;background:#c29479;filter:blur(1.5px);transform:rotate(15deg)"></div>
<div style="left:292px;top:168px;width:9px;height:30px;border-radius:50%;background:#bc8f76;filter:blur(1.5px);transform:rotate(40deg)"></div>
<div style="left:178px;top:152px;width:2px;height:57px;background:#d8d8d8;opacity:0.6;transform:rotate(8deg);filter:blur(0.6px)"></div>
<div style="left:202px;top:150px;width:2px;height:59px;background:#d8d8d8;opacity:0.6;transform:rotate(-18deg);filter:blur(0.6px)"></div>
<div style="left:0px;top:187px;width:94px;height:20px;background:rgba(28,28,28,0.72)"></div>
</div>
<div class="t" style="left:23px;top:197.5px;font-size:14px;color:#fff"></div>
</div>
<svg style="left:1555px;top:607.30px" width="74.0" height="22.4"><text x="0" y="16.24" font-size="14" fill="#fff" font-weight="normal" font-family="Liberation Sans" textLength="68.0" lengthAdjust="spacingAndGlyphs" >松尾 講師</text></svg>
<svg style="left:1537px;top:610px" width="12" height="16"><path d="M3 2 H9 L8 7 L10.5 9 H1.5 L4 7 Z M6 9 V14" fill="#fff" stroke="#fff" stroke-width="1"/></svg>
</body></html>
